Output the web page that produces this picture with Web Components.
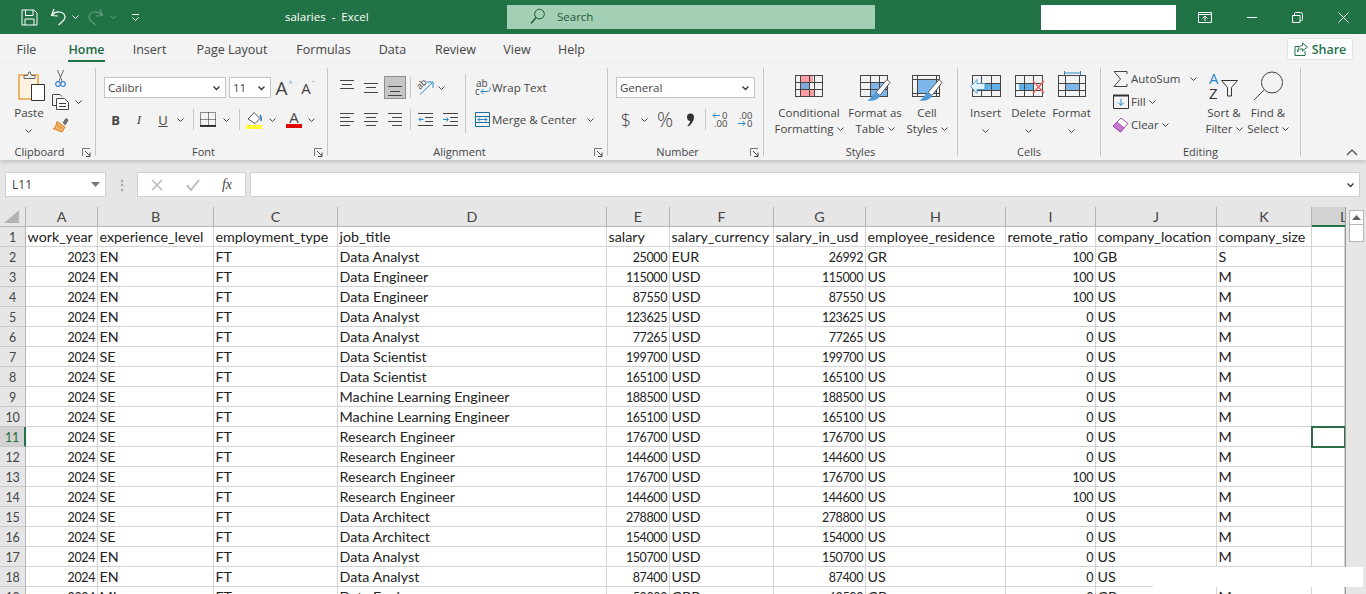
<!DOCTYPE html>
<html>
<head>
<meta charset="utf-8">
<title>salaries - Excel</title>
<style>
  html, body { margin: 0; height: 594px; overflow: hidden; background: #e6e6e6; }
</style>
</head>
<body>
<x-titlebar></x-titlebar>
<x-tabs></x-tabs>
<x-ribbon></x-ribbon>
<x-formula-bar></x-formula-bar>
<x-sheet></x-sheet>
<script>
const UI_FONT = `"Open Sans", "Noto Sans", sans-serif`;
const CELL_FONT = `Lato, "Liberation Sans", sans-serif`;

// grid of thin lines used by the big style / cell icons
function grid(x, y, xs, ys, w, h, color = "#444") {
  let d = "";
  for (const v of xs) d += `M${x + v + 0.5} ${y}v${h}`;
  for (const v of ys) d += `M${x} ${y + v + 0.5}h${w}`;
  return `<path d="${d}" stroke="${color}" fill="none"/>`;
}
const BRUSH = `<path d="M27 4.500l3 3-10 13-4-3z" fill="#fff" stroke="#555"/><path d="M16 17.500l4 3c-1 4-7 6-13 5 4-1 5-6 9-8z" fill="#4f9bd9"/>`;
const lines = (rows, c = "#444") => rows.map(r => `<path d="M${r[0]} ${r[1] + 0.5}H${r[2]}" stroke="${c}"/>`).join("");

const ICONS = {
  chev: [7, 4, `<path d="M.5.500l3 3 3-3" stroke="#444" fill="none"/>`],
  chevUp: [12, 7, `<path d="M1 6l5-5 5 5" stroke="#444" fill="none" stroke-width="1.200"/>`],
  chevDark: [7, 4, `<path d="M.5.500l3 3 3-3" stroke="#333" fill="none" stroke-width="1.300"/>`],
  caret: [9, 5, `<path d="M0 0h9l-4.500 5z" fill="#777"/>`],
  launcher: [9, 9, `<path d="M.5 8V.5H8" stroke="#777" fill="none"/><path d="M3 3l5 5M8 4.500V8.500H4" stroke="#444" fill="none"/>`],

  save: [17, 17, `<path d="M1 1h12l3 3v12H1zM4.500 1v5.500h7.500V1M4 16v-6h9v6" stroke="#fff" fill="none"/>`],
  undo: [17, 18, `<path d="M4 1L1.500 7.500 8 8" stroke="#fff" fill="none" stroke-width="1.200"/><path d="M2 7C6 2.500 14 3 15 8.500 15.500 12 11 15 8.500 17" stroke="#fff" fill="none" stroke-width="1.200"/>`],
  redo: [17, 18, `<path d="M13 1l2.500 6.500L9 8" stroke="#5d9c7b" fill="none" stroke-width="1.200"/><path d="M15 7C11 2.500 3 3 2 8.500 1.500 12 6 15 8.500 17" stroke="#5d9c7b" fill="none" stroke-width="1.200"/>`],
  chevW: [7, 4, `<path d="M.5.500l3 3 3-3" stroke="#fff" fill="none"/>`],
  chevD: [7, 4, `<path d="M.5.500l3 3 3-3" stroke="#5d9c7b" fill="none"/>`],
  custom: [7, 7, `<path d="M0 .5h7M.5 3.500l3 3 3-3" stroke="#fff" fill="none"/>`],
  search: [15, 17, `<circle cx="9.500" cy="6" r="4.800" stroke="#1d5a3a" fill="none"/><path d="M6 9.500L1 15.500" stroke="#1d5a3a" stroke-width="1.300"/>`],
  display: [14, 11, `<path d="M.5.500h13v10H.5zM.5 2.500h13M7 9V4.500M4.500 6.500L7 4l2.500 2.500" stroke="#fff" fill="none"/>`],
  minimize: [10, 1, `<path d="M0 .5h10" stroke="#fff"/>`],
  restore: [11, 11, `<path d="M.5 3.500h7.500v7H.5zM2.500 3V1.500q0-1 1-1h5q2 0 2 2v5q0 1-1 1h-1" stroke="#fff" fill="none"/>`],
  close: [11, 11, `<path d="M.5.500l10 10M10.500.500l-10 10" stroke="#fff"/>`],
  share: [14, 14, `<path d="M1 4.500h4M1 4.500v9h10V9" stroke="#217346" fill="none"/><path d="M8.500 1l5 4-5 4V6.800C6 6.800 4.500 8 3.500 10 3.800 6.500 5.500 3.500 8.500 3.200z" stroke="#217346" fill="none"/>`],

  paste: [28, 30, `<g transform="translate(3 0)"><path d="M1 4h19v24H1z" fill="#fdf3e0" stroke="#e8a33d" stroke-width="1.500"/><path d="M6 4.500h3.500L11 1h1l1.500 3.500H17v3H6z" fill="#f3f3f3" stroke="#666"/><path d="M13.500 13.500h13v16h-13z" fill="#fff" stroke="#333"/></g>`],
  cut: [11, 17, `<path d="M2.500 0l4.500 11M8.500 0L4 11" stroke="#666" fill="none"/><circle cx="3" cy="14" r="2.300" stroke="#3a86c8" fill="none" stroke-width="1.200"/><circle cx="8" cy="14" r="2.300" stroke="#3a86c8" fill="none" stroke-width="1.200"/>`],
  copy: [17, 16, `<path d="M1 .5h7l2 2M.5.500v11H4" stroke="#444" fill="none"/><path d="M4.500 4.500h8l4 4v7h-12z" fill="#fff" stroke="#444"/><path d="M7 9.500h7M7 12.500h7" stroke="#444"/>`],
  painter: [17, 16, `<path d="M11 6l3-4.500 2 1.500-3 5" fill="#777" stroke="#555"/><path d="M5 4.500l8 5.500-3 5-9-3.500c2 0 3-3 4-7z" fill="#f3b26a" stroke="#d97f1f"/><path d="M5 8l5 3" stroke="#d97f1f"/>`],

  border: [16, 15, `<path d="M.5.500h15v13H.5zM8.500.5v13M.5 7.500h15" stroke="#222" stroke-dasharray="1 1" fill="none"/><path d="M0 14h16" stroke="#111" stroke-width="1.600"/>`],
  fill: [17, 18, `<path d="M2 8l6-6.500 6 6-5 5z" fill="#fff" stroke="#555"/><path d="M14 4q2 3 1 6" stroke="#2b79c2" stroke-width="1.500" fill="none"/><path d="M0 14h16v4H0z" fill="#ffff33"/>`],
  fontColorBar: [17, 4, `<path d="M0 0h16v4H0z" fill="#e00000"/>`],

  alignTop: [14, 18, lines([[0, 1, 14], [2, 5, 12], [0, 9, 14]])],
  alignMid: [14, 18, lines([[0, 4, 14], [2, 8, 12], [0, 13, 14]])],
  alignBot: [14, 18, lines([[0, 7, 14], [2, 12, 12], [0, 16, 14]])],
  left: [14, 14, lines([[0, 0, 14], [0, 4, 10], [0, 8, 14], [0, 12, 10]])],
  center: [14, 14, lines([[0, 0, 14], [2, 4, 12], [0, 8, 14], [2, 12, 12]])],
  right: [14, 14, lines([[0, 0, 14], [4, 4, 14], [0, 8, 14], [4, 12, 14]])],
  indentL: [15, 14, lines([[0, 0, 15], [7, 4, 15], [7, 8, 15], [0, 12, 15]]) + `<path d="M5.500 6.500H1M3 4.500l-2 2 2 2" stroke="#2b88c8" fill="none"/>`],
  indentR: [15, 14, lines([[0, 0, 15], [7, 4, 15], [7, 8, 15], [0, 12, 15]]) + `<path d="M0 6.500h5M3.500 4.500l2 2-2 2" stroke="#2b88c8" fill="none"/>`],
  orient: [17, 15, `<text transform="translate(3 10) rotate(-45)" font-family="Open Sans" font-size="9" fill="#444">ab</text><path d="M3 14.500L15 3M10 2h6v6" stroke="#2b88c8" fill="none"/>`],
  wrap: [16, 17, `<text x="1" y="7.500" font-family="Open Sans" font-size="10" fill="#444">ab</text><text x="0" y="16" font-family="Open Sans" font-size="10" fill="#444">c</text><path d="M15 8.500q1 4-3 4H6M8.500 10l-2.500 2.500 2.500 2.500" stroke="#2b88c8" fill="none"/>`],
  merge: [16, 15, `<path d="M.5.500h14v14H.5zM.5 4.500h14M.5 10.500h14" stroke="#1f6f9c" fill="none"/><path d="M3 7.500h9M5 5.500l-2 2 2 2M10 5.500l2 2-2 2" stroke="#2b88c8" fill="none"/>`],
  comma: [9, 14, `<path d="M1 4a3.500 3.500 0 1 1 7 0c0 4-3 8-6 9.500l-.5-.8C3 11 4 9.500 4.200 8 2.500 8 1 6.500 1 4z" fill="#333"/>`],
  decMore: [16, 15, `<text x="10" y="7" font-family="Open Sans" font-size="9.500" fill="#444">0</text><text x="2" y="15" font-family="Open Sans" font-size="9.500" fill="#444">.00</text><path d="M8 3.500H1M3.500 1L1 3.500 3.500 6" stroke="#2b88c8" fill="none"/>`],
  decLess: [16, 15, `<text x="2" y="7" font-family="Open Sans" font-size="9.500" fill="#444">.00</text><text x="10" y="15" font-family="Open Sans" font-size="9.500" fill="#444">0</text><path d="M1 11.500h7M5.500 9L8 11.500 5.500 14" stroke="#2b88c8" fill="none"/>`],

  cond: [28, 22, `<path d="M5 0h13v7H5zM5 14h14v8H5z" fill="#ff9ba3"/><path d="M5 7h9v7H5z" fill="#7fa8dc"/>` + grid(0, 0, [0, 5, 14, 19, 27], [0, 7, 14, 21], 28, 22)],
  table: [30, 22, `<path d="M10 7h18v15H10z" fill="#7db7ea"/>` + grid(0, 0, [0, 10, 19, 27], [0, 7, 14, 21], 28, 22) + BRUSH],
  styles: [30, 22, `<path d="M5 5h19v13H5z" fill="#7db7ea"/>` + grid(0, 0, [0, 5, 24], [0, 4, 18, 21], 28, 22) + grid(0, 0, [27], [], 28, 22) + BRUSH],
  insert: [32, 22, `<path d="M14 8h17v7H14z" fill="#5fb0e8"/>` + grid(2, 0, [0, 9, 19, 28], [0, 8, 15, 21], 29, 22) + `<path d="M.5 11.500L7 4.500V8.500h8v6H7v4z" fill="#e3f1fb" stroke="#4f9bd9"/>`],
  del: [28, 22, `<path d="M4 8h14v7H4z" fill="#5fb0e8"/>` + grid(0, 0, [0, 9, 18, 27], [0, 8, 15, 21], 28, 22) + `<path d="M18 6l11 12M29 6L18 18" stroke="#e8635c" stroke-width="1.400"/>`],
  format: [28, 32, `<path d="M6.500 1v4M22.500 1v4M6.500 3h16" stroke="#2b88c8" fill="none"/><path d="M7 13h15v7H7z" fill="#7db7ea"/>` + grid(0, 5, [0, 7, 21, 27], [0, 8, 15, 21], 28, 22)],

  sigma: [15, 16, `<path d="M14 3V.5H1l6.500 7.500L1 15.500h13V13" stroke="#444" fill="none"/>`],
  fillDown: [16, 15, `<path d="M.5 1.500h15v13H.5z" stroke="#333" fill="none"/><path d="M0 1.500h16" stroke="#333" stroke-width="2"/><path d="M8 4.500v7M5 8.500l3 3 3-3" stroke="#2b88c8" fill="none"/>`],
  eraser: [17, 16, `<path d="M1 9l8-8 7 5.500-7.500 8.500z" fill="#fff" stroke="#a04fb0"/><path d="M1 9l4-4 7 6-3.500 4z" fill="#c978d2" stroke="#a04fb0"/>`],
  sort: [30, 28, `<text x="0" y="12" font-family="Open Sans" font-size="15" fill="#2b88c8">A</text><text x="0" y="27" font-family="Open Sans" font-size="15" fill="#333">Z</text><path d="M12.500 8.500h16l-6 7v8.500h-4v-8.500z" stroke="#333" fill="none"/>`],
  find: [30, 30, `<circle cx="19" cy="11.500" r="10.500" stroke="#444" fill="none"/><path d="M11 19L1 29" stroke="#444"/>`],

  cancel: [12, 12, `<path d="M1 1l10 10M11 1L1 11" stroke="#bbb" stroke-width="1.500"/>`],
  enter: [14, 12, `<path d="M1 6l4 5 8-10" stroke="#bbb" stroke-width="2" fill="none"/>`],
  corner: [15, 13, `<path d="M15 0v13H0z" fill="#b4b4b4"/>`],
  arrowUp: [9, 5, `<path d="M0 5l4.500-5 4.500 5z" fill="#606060"/>`]
};

class XIcon extends HTMLElement {
  constructor() {
    super();
    this.attachShadow({mode: "open"});
  }
  connectedCallback() {
    const [w, h, body] = ICONS[this.getAttribute("name")];
    this.shadowRoot.innerHTML = `<style>:host{display:inline-flex;width:${w}px;height:${h}px;flex:none}svg{display:block;overflow:visible}</style>
<svg width="${w}" height="${h}" viewBox="0 0 ${w} ${h}">${body}</svg>`;
  }
}

class XTitlebar extends HTMLElement {
  constructor() {
    super();
    this.attachShadow({mode: "open"});
    this.shadowRoot.innerHTML = `
<style>
  :host { display: flex; align-items: center; height: 34px; background: #217346; color: #fff; font: 11.500px ${UI_FONT}; }
  .c { display: flex; align-items: center; justify-content: center; flex: none; }
  .title { width: 226px; padding: 0 0 2px 4px; box-sizing: border-box; white-space: pre; }
  .search { width: 368px; height: 24px; background: #a3cfb4; color: #1d5a3a; display: flex; align-items: center; padding: 0 0 1px 23px; box-sizing: border-box; gap: 12px; }
  .blank { width: 135px; height: 25px; background: #fff; margin-left: 166px; }
</style>
<span class="c" style="width:21px"></span>
<span class="c" style="width:17px"><x-icon name="save"></x-icon></span>
<span class="c" style="width:11px"></span>
<span class="c" style="width:18px"><x-icon name="undo"></x-icon></span>
<span class="c" style="width:17px"><x-icon name="chevW"></x-icon></span>
<span class="c" style="width:22px"><x-icon name="redo"></x-icon></span>
<span class="c" style="width:14px"><x-icon name="chevD"></x-icon></span>
<span class="c" style="width:24px;margin-left:3px"><x-icon name="custom"></x-icon></span>
<span class="c" style="width:134px"></span>
<span class="title">salaries  -  Excel</span>
<div class="search"><x-icon name="search"></x-icon><span>Search</span></div>
<div class="blank"></div>
<span class="c" style="width:22px;margin-left:18px"><x-icon name="display"></x-icon></span>
<span class="c" style="width:22px;margin-left:25px"><x-icon name="minimize"></x-icon></span>
<span class="c" style="width:22px;margin-left:23px"><x-icon name="restore"></x-icon></span>
<span class="c" style="width:22px;margin-left:24px"><x-icon name="close"></x-icon></span>`;
  }
}

class XTabs extends HTMLElement {
  constructor() {
    super();
    this.attachShadow({mode: "open"});
    const tabs = [["File", 53], ["Home", 67], ["Insert", 59], ["Page Layout", 106], ["Formulas", 77], ["Data", 61], ["Review", 65], ["View", 58], ["Help", 51]];
    this.shadowRoot.innerHTML = `
<style>
  :host { display: flex; height: 30px; background: #f3f3f3; color: #444; font: 12.500px ${UI_FONT}; }
  .tab { display: flex; justify-content: center; flex: none; padding-top: 7px; box-sizing: border-box; }
  .tab span { display: block; height: 21px; line-height: 18px; box-sizing: border-box; white-space: nowrap; }
  .active span { color: #1e6b41; font-weight: 600; border-bottom: 2px solid #217346; }
  .share { margin: 4px 13px 0 auto; width: 66px; height: 22px; box-sizing: border-box; background: #fff; border: 1px solid #e4e4e4; border-radius: 2px; color: #217346; font-weight: 600; display: flex; align-items: center; justify-content: center; gap: 4px; }
</style>
${tabs.map(([t, w]) => `<div class="tab ${t === "Home" ? "active" : ""}" style="width:${w}px"><span>${t}</span></div>`).join("")}
<div class="share"><x-icon name="share"></x-icon><span>Share</span></div>`;
  }
}

class XGroup extends HTMLElement {
  constructor() {
    super();
    this.attachShadow({mode: "open"});
  }
  connectedCallback() {
    const launcher = this.hasAttribute("launcher");
    this.shadowRoot.innerHTML = `
<style>
  :host { display: flex; flex-direction: column; flex: none; width: ${this.getAttribute("width")}px; height: 88px; margin-top: 4px; box-sizing: border-box; border-right: 1px solid #c6c6c6; position: relative; }
  .body { flex: 1; display: flex; min-height: 0; }
  .label { height: 16px; line-height: 16px; margin-bottom: -4px; text-align: center; font-size: 11px; color: #444; padding-right: ${launcher ? 16 : 0}px; }
  .launcher { position: absolute; right: 4px; bottom: -1px; }
</style>
<div class="body"><slot></slot></div>
<div class="label">${this.getAttribute("label")}</div>
${launcher ? `<x-icon class="launcher" name="launcher"></x-icon>` : ""}`;
  }
}

// tall ribbon command: icon on top and a label under it
class XBig extends HTMLElement {
  constructor() {
    super();
    this.attachShadow({mode: "open"});
    this.shadowRoot.innerHTML = `
<style>
  :host { display: flex; flex-direction: column; align-items: center; flex: none; }
  .icon { height: 28px; margin-top: 4px; margin-bottom: 5px; display: flex; align-items: center; justify-content: center; }
  .text { line-height: 16px; text-align: center; white-space: nowrap; }
</style>
<div class="icon"><slot name="icon"></slot></div>
<div class="text"><slot></slot></div>`;
  }
}

const ic = n => `<x-icon name="${n}"></x-icon>`;
const c = (w, html = "", cls = "") => `<span class="c ${cls}" style="width:${w}px">${html}</span>`;
const big = (w, icon, label) => `<x-big style="width:${w}px"><x-icon slot="icon" name="${icon}"></x-icon>${label}</x-big>`;
const dn = `<x-icon class="ch" name="chev"></x-icon>`;

class XRibbon extends HTMLElement {
  constructor() {
    super();
    this.attachShadow({mode: "open"});
    this.shadowRoot.innerHTML = `
<style>
  :host { display: flex; height: 96px; background: #f3f3f3; color: #444; font: 11.500px ${UI_FONT}; box-shadow: 0 2px 4px rgba(0,0,0,.16); position: relative; }
  .c { display: inline-flex; align-items: center; justify-content: center; flex: none; height: 21px; }
  .rows { display: flex; flex-direction: column; gap: 11px; padding-top: 9px; }
  .row { display: flex; align-items: center; height: 21px; white-space: nowrap; }
  .tall { height: 23px; }
  .stack { display: flex; flex-direction: column; margin-top: -1px; }
  .combo { height: 21px; box-sizing: border-box; background: #fff; border: 1px solid #c4c4c4; display: flex; align-items: center; justify-content: space-between; padding: 0 5px 0 3px; flex: none; }
  .sep { display: block; width: 1px; height: 21px; background: #c6c6c6; }
  .vsep { width: 1px; height: 59px; background: #c6c6c6; margin-top: 6px; flex: none; }
  .pressed { width: 22px; height: 23px; box-sizing: border-box; background: #c6c6c6; border: 1px solid #8f8f8f; display: flex; align-items: center; justify-content: center; }
  .bi { font-size: 13px; color: #444; font-family: "Liberation Serif", serif; }
  .cap { font-size: 19px; color: #444; line-height: 18px; }
  .mini { font-size: 7px; color: #2b88c8; margin: -8px 0 0 1px; }
  .ch { margin-left: 3px; vertical-align: 2px; }
  .swatch { display: flex; flex-direction: column; align-items: center; line-height: 13px; font-size: 15px; }
  .collapse { position: absolute; right: 8px; bottom: 4px; }
</style>
<x-group label="Clipboard" width="96" launcher>
  <div style="width:8px"></div>
  ${big(42, "paste", "Paste<br>" + ic("chev"))}
  <div class="stack">
    <div class="row tall">${c(20, ic("cut"))}</div>
    <div class="row tall">${c(20, ic("copy"))}${c(16, ic("chev"))}</div>
    <div class="row tall">${c(20, ic("painter"))}</div>
  </div>
</x-group>
<x-group label="Font" width="232" launcher>
  <div style="width:8px"></div>
  <div class="rows">
    <div class="row">
      <div class="combo" style="width:122px"><span>Calibri</span>${ic("chevDark")}</div>
      <div class="combo" style="width:42px;margin-left:3px"><span>11</span>${ic("chevDark")}</div>
      ${c(1)}
      ${c(24, `<span class="cap">A</span><span class="mini">^</span>`)}
      ${c(24, `<span class="cap" style="font-size:15px">A</span><span class="mini">ˇ</span>`)}
    </div>
    <div class="row">
      ${c(23, `<b class="bi" style="font-family:'Open Sans'">B</b>`)}
      ${c(24, `<i class="bi">I</i>`)}
      ${c(24, `<u class="bi" style="font-family:'Open Sans'">U</u>`)}
      ${c(11, ic("chev"))}
      ${c(14, `<span class="sep"></span>`)}
      ${c(16, ic("border"))}
      ${c(20, ic("chev"))}
      ${c(6, `<span class="sep"></span>`)}
      ${c(25, ic("fill"))}
      ${c(10, ic("chev"))}
      <span style="width:3px"></span>
      ${c(28, `<span class="swatch"><span>A</span>${ic("fontColorBar")}</span>`)}
      ${c(6, ic("chev"))}
    </div>
  </div>
</x-group>
<x-group label="Alignment" width="280" launcher>
  <div style="width:7px"></div>
  <div class="rows" style="width:130px;flex:none">
    <div class="row">
      ${c(24, ic("alignTop"))}${c(24, ic("alignMid"))}
      ${c(24, `<span class="pressed">${ic("alignBot")}</span>`)}
      ${c(6, `<span class="sep"></span>`)}
      ${c(24, ic("orient"))}${c(8, ic("chev"))}
    </div>
    <div class="row">
      ${c(24, ic("left"))}${c(24, ic("center"))}${c(24, ic("right"))}
      ${c(6, `<span class="sep"></span>`)}
      ${c(25, ic("indentL"))}${c(24, ic("indentR"))}
    </div>
  </div>
  <div class="vsep"></div>
  <div class="rows" style="padding-left:7px">
    <div class="row">${c(19, ic("wrap"))}<span>Wrap Text</span></div>
    <div class="row">${c(19, ic("merge"))}<span>Merge &amp; Center</span><x-icon name="chev" style="margin-left:10px"></x-icon></div>
  </div>
</x-group>
<x-group label="Number" width="156" launcher>
  <div style="width:8px"></div>
  <div class="rows">
    <div class="row"><div class="combo" style="width:139px"><span>General</span>${ic("chevDark")}</div></div>
    <div class="row">
      ${c(20, `<span style="font-size:18px;color:#444;font-weight:300">$</span>`)}
      ${c(16, ic("chev"))}
      ${c(26, `<span style="font-size:20px;color:#444;font-weight:300">%</span>`)}
      ${c(24, ic("comma"))}
      ${c(6, `<span class="sep"></span>`)}
      ${c(24, ic("decMore"))}
      ${c(26, ic("decLess"))}
    </div>
  </div>
</x-group>
<x-group label="Styles" width="194">
  <div style="width:9px"></div>
  ${big(72, "cond", "Conditional<br>Formatting" + dn)}
  ${big(60, "table", "Format as<br>Table" + dn)}
  ${big(44, "styles", "Cell<br>Styles" + dn)}
</x-group>
<x-group label="Cells" width="143">
  <div style="width:6px"></div>
  ${big(43, "insert", "Insert<br>" + ic("chev"))}
  ${big(43, "del", "Delete<br>" + ic("chev"))}
  ${big(43, "format", "Format<br>" + ic("chev"))}
</x-group>
<x-group label="Editing" width="200">
  <div style="width:9px"></div>
  <div class="stack" style="width:92px;flex:none">
    <div class="row tall">${c(21, ic("sigma"))}<span>AutoSum</span><x-icon name="chev" style="margin-left:10px"></x-icon></div>
    <div class="row tall">${c(21, ic("fillDown"))}<span>Fill</span>${dn}</div>
    <div class="row tall">${c(21, ic("eraser"))}<span>Clear</span>${dn}</div>
  </div>
  ${big(44, "sort", "Sort &amp;<br>Filter" + dn)}
  ${big(44, "find", "Find &amp;<br>Select" + dn)}
</x-group>
<x-icon class="collapse" name="chevUp"></x-icon>`;
  }
}

class XFormulaBar extends HTMLElement {
  constructor() {
    super();
    this.attachShadow({mode: "open"});
    this.shadowRoot.innerHTML = `
<style>
  :host { display: flex; height: 47px; padding: 12px 6px 0 5px; box-sizing: border-box; background: #e6e6e6; color: #444; font: 12px ${UI_FONT}; }
  .box { height: 25px; box-sizing: border-box; background: #fff; border: 1px solid #d0d0d0; display: flex; align-items: center; flex: none; }
  .name { width: 101px; justify-content: space-between; padding: 0 5px 0 6px; }
  .dots { width: 31px; height: 25px; display: flex; justify-content: center; align-items: center; flex: none; color: #aaa; font-size: 14px; font-weight: 700; letter-spacing: 0; }
  .fx { width: 109px; margin-right: 4px; }
  .fx span { display: flex; justify-content: center; align-items: center; }
  .fx i { font: italic 14px "Liberation Serif", serif; color: #444; }
  .input { flex: 1; justify-content: flex-end; padding-right: 5px; }
</style>
<div class="box name"><span>L11</span>${ic("caret")}</div>
<div class="dots">⋮</div>
<div class="box fx">
  <span style="width:37px">${ic("cancel")}</span>
  <span style="width:36px">${ic("enter")}</span>
  <span style="width:32px"><i>fx</i></span>
</div>
<div class="box input">${ic("chevDark")}</div>`;
  }
}

class XSheet extends HTMLElement {
  constructor() {
    super();
    this.attachShadow({mode: "open"});
    const widths = [26, 72, 116, 124, 269, 63, 104, 92, 140, 90, 121, 95, 33];
    const heads = ["A", "B", "C", "D", "E", "F", "G", "H", "I", "J", "K"];
    const titles = ["work_year", "experience_level", "employment_type", "job_title", "salary", "salary_currency", "salary_in_usd", "employee_residence", "remote_ratio", "company_location", "company_size"];
    const DA = "Data Analyst", DE = "Data Engineer", DS = "Data Scientist", ML = "Machine Learning Engineer", RE = "Research Engineer", AR = "Data Architect";
    const rows = [
      [2023, "EN", DA, 25000, "EUR", 26992, "GR", 100, "GB", "S"],
      [2024, "EN", DE, 115000, "USD", 115000, "US", 100, "US", "M"],
      [2024, "EN", DE, 87550, "USD", 87550, "US", 100, "US", "M"],
      [2024, "EN", DA, 123625, "USD", 123625, "US", 0, "US", "M"],
      [2024, "EN", DA, 77265, "USD", 77265, "US", 0, "US", "M"],
      [2024, "SE", DS, 199700, "USD", 199700, "US", 0, "US", "M"],
      [2024, "SE", DS, 165100, "USD", 165100, "US", 0, "US", "M"],
      [2024, "SE", ML, 188500, "USD", 188500, "US", 0, "US", "M"],
      [2024, "SE", ML, 165100, "USD", 165100, "US", 0, "US", "M"],
      [2024, "SE", RE, 176700, "USD", 176700, "US", 0, "US", "M"],
      [2024, "SE", RE, 144600, "USD", 144600, "US", 0, "US", "M"],
      [2024, "SE", RE, 176700, "USD", 176700, "US", 100, "US", "M"],
      [2024, "SE", RE, 144600, "USD", 144600, "US", 100, "US", "M"],
      [2024, "SE", AR, 278800, "USD", 278800, "US", 0, "US", "M"],
      [2024, "SE", AR, 154000, "USD", 154000, "US", 0, "US", "M"],
      [2024, "EN", DA, 150700, "USD", 150700, "US", 0, "US", "M"],
      [2024, "EN", DA, 87400, "USD", 87400, "US", 0, "US", "M"],
      [2024, "MI", DE, 50000, "GBP", 63500, "GB", 0, "GB", "M"]
    ];
    const cell = (v, num) => `<div class="cell ${num ? "num" : ""}">${v}</div>`;
    let html = `<div class="head corner">${ic("corner")}</div>`;
    html += heads.map(h => `<div class="head">${h}</div>`).join("");
    html += `<div class="head sel-col"><span>L</span></div>`;
    html += `<div class="rowh">1</div>` + titles.map(t => cell(t)).join("") + cell("");
    rows.forEach((r, i) => {
      const n = i + 2;
      html += `<div class="rowh ${n === 11 ? "sel-row" : ""}">${n}</div>`;
      html += cell(r[0], true) + cell(r[1]) + cell("FT") + cell(r[2]) + cell(r[3], true) + cell(r[4]) + cell(r[5], true) + cell(r[6]) + cell(r[7], true) + cell(r[8]) + cell(r[9]);
      html += n === 11 ? `<div class="cell active"></div>` : cell("");
    });
    this.shadowRoot.innerHTML = `
<style>
  :host { display: flex; height: 387px; position: relative; overflow: hidden; background: #e6e6e6; font: 14.300px ${CELL_FONT}; color: #222; }
  .grid { display: grid; grid-template-columns: ${widths.map(w => w + "px").join(" ")}; grid-auto-rows: 20px; flex: none; overflow: hidden; background: #fff; height: 387px; }
  .head, .rowh { background: #e6e6e6; color: #444; display: flex; align-items: center; justify-content: center; box-sizing: border-box; border-right: 1px solid #b5b5b5; border-bottom: 1px solid #b5b5b5; }
  .rowh { border-bottom-color: #c8c8c8; font-size: 12.500px; letter-spacing: -.3px; padding-top: 1px; }
  .corner { justify-content: center; padding: 0 3px 0 0; }
  .sel-col { background: #d2d2d2; border-bottom: 2px solid #217346; justify-content: flex-start; overflow: hidden; padding-left: 28px; border-right: 0; }
  .sel-row { background: #d2d2d2; border-right: 2px solid #217346; color: #1e6b41; }
  .cell { box-sizing: border-box; border-right: 1px solid #d4d4d4; border-bottom: 1px solid #d4d4d4; padding: 0 2px 0 1.500px; line-height: 20px; white-space: nowrap; overflow: hidden; }
  .num { text-align: right; font-size: 12.500px; letter-spacing: -.4px; line-height: 21px; }
  .active { outline: 2px solid #2c6e4a; outline-offset: -1px; position: relative; z-index: 1; border: 0; }
  .scroll { flex: 1; background: #e6e6e6; border-left: 1px solid #999; padding: 3px 0 0 3px; box-sizing: border-box; }
  .btn { width: 15px; height: 15px; box-sizing: border-box; background: #fff; border: 1px solid #b5b5b5; display: flex; align-items: center; justify-content: center; }
  .thumb { width: 15px; height: 17px; box-sizing: border-box; background: #fff; border: 1px solid #b5b5b5; border-top: 0; }
  .patch { position: absolute; left: 1153px; top: 360px; width: 210px; height: 20px; background: #fff; }
</style>
<div class="grid">${html}</div>
<div class="scroll"><div class="btn">${ic("arrowUp")}</div><div class="thumb"></div></div>
<div class="patch"></div>`;
  }
}

customElements.define("x-icon", XIcon);
customElements.define("x-titlebar", XTitlebar);
customElements.define("x-tabs", XTabs);
customElements.define("x-group", XGroup);
customElements.define("x-big", XBig);
customElements.define("x-ribbon", XRibbon);
customElements.define("x-formula-bar", XFormulaBar);
customElements.define("x-sheet", XSheet);
</script>
</body>
</html>
